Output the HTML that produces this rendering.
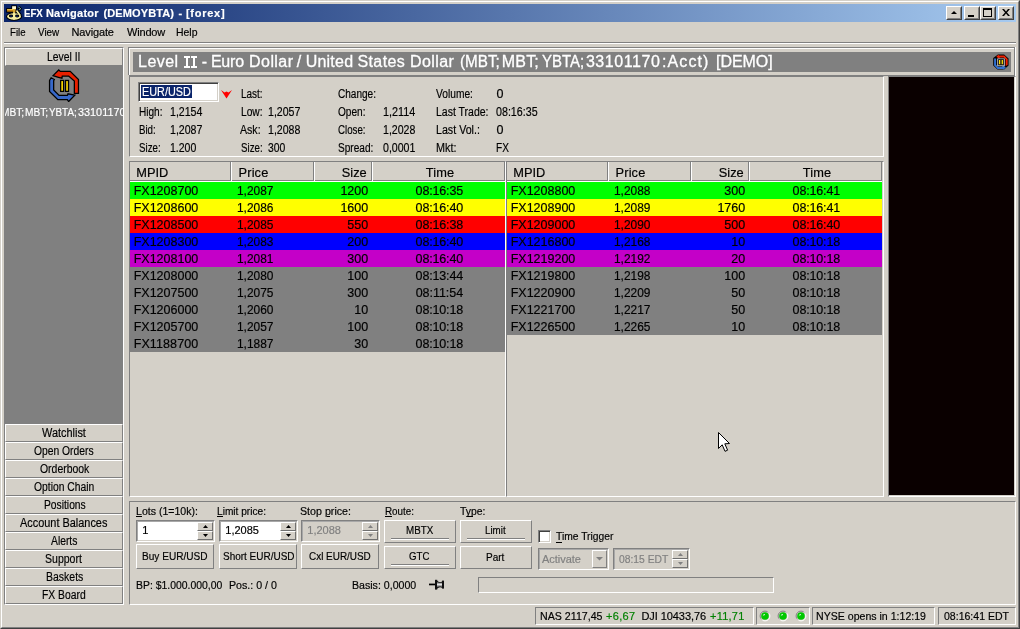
<!DOCTYPE html>
<html><head><meta charset="utf-8">
<style>
*{box-sizing:border-box;margin:0;padding:0}
html,body{width:1020px;height:629px;overflow:hidden;background:#d4d0c8}
body{font-family:"Liberation Sans",sans-serif;font-size:11px;color:#000;position:relative}
.abs{position:absolute}
.t{position:absolute;white-space:pre;-webkit-text-stroke:0.18px currentColor}
</style></head><body><div id="w" style="position:absolute;left:0;top:0;width:1020px;height:629px;will-change:transform">
<div class="abs " style="left:0px;top:0px;width:1020px;height:629px;border:1px solid;border-color:#d4d0c8 #404040 #404040 #d4d0c8"></div>
<div class="abs " style="left:1px;top:1px;width:1018px;height:627px;border:1px solid;border-color:#fff #808080 #808080 #fff"></div>
<div class="abs " style="left:4px;top:4px;width:1012px;height:18px;background:linear-gradient(90deg,#0a246a 0%,#a6caf0 100%)"></div>
<div class="t" style="left:23.60px;top:5.19px;font-size:11px;line-height:16px;color:#fff;transform:scaleX(0.8787);transform-origin:0 0;font-weight:bold;">EFX</div>
<div class="t" style="left:45.90px;top:5.19px;font-size:11px;line-height:16px;color:#fff;letter-spacing:0.240px;font-weight:bold;">Navigator</div>
<div class="t" style="left:103.50px;top:5.19px;font-size:11px;line-height:16px;color:#fff;letter-spacing:0.114px;font-weight:bold;">(DEMOYBTA)</div>
<div class="t" style="left:178.40px;top:5.19px;font-size:11px;line-height:16px;color:#fff;font-weight:bold;">-</div>
<div class="t" style="left:185.90px;top:5.19px;font-size:11px;line-height:16px;color:#fff;letter-spacing:0.753px;font-weight:bold;">[forex]</div>
<svg class="abs" style="left:2px;top:2px" width="26" height="22" viewBox="0 0 743 629">
<defs><linearGradient id="gd" x1="0" y1="0" x2="0" y2="1"><stop offset="0" stop-color="#f8d860"/><stop offset="0.5" stop-color="#c88818"/><stop offset="1" stop-color="#a06808"/></linearGradient></defs>
<ellipse cx="345" cy="415" rx="228" ry="122" fill="#000"/>
<path d="M420 240 L525 385" stroke="#000" stroke-width="95" fill="none"/>
<rect x="120" y="175" width="290" height="130" fill="#000"/>
<rect x="265" y="95" width="160" height="120" fill="#000"/>
<path d="M440 170 L500 110 L575 190 L515 270 Z" fill="#000"/>
<ellipse cx="345" cy="415" rx="198" ry="95" fill="#f4eca0"/>
<path d="M415 245 L520 385" stroke="#f4eca0" stroke-width="46" fill="none"/>
<ellipse cx="258" cy="400" rx="62" ry="42" fill="#000"/><ellipse cx="432" cy="400" rx="62" ry="42" fill="#000"/>
<ellipse cx="262" cy="405" rx="36" ry="20" fill="#0a246a"/><ellipse cx="428" cy="405" rx="36" ry="20" fill="#0a246a"/>
<rect x="315" y="290" width="60" height="215" fill="#f4eca0"/>
<rect x="145" y="200" width="240" height="80" fill="url(#gd)"/>
<rect x="290" y="120" width="110" height="85" fill="#fff8d0"/>
<rect x="315" y="200" width="62" height="100" fill="#d8a830"/>
<path d="M465 150 l20 -20 l25 25 l-20 20 z M500 190 l20 -20 l25 25 l-20 20 z M480 215 l15 -15 l20 20 l-15 15 z" fill="#90d0d8"/>
</svg>
<div class="abs" style="left:946px;top:6px;width:16px;height:14px;background:#d4d0c8;border:1px solid;border-color:#fff #404040 #404040 #fff"><div style="position:absolute;left:0;top:0;right:0;bottom:0;border:1px solid;border-color:#d4d0c8 #808080 #808080 #d4d0c8"></div><svg style="position:absolute;left:4px;top:4px" width="6" height="3"><path d="M0 3 L3 0 L6 3 Z" fill="#000"/></svg></div>
<div class="abs" style="left:964px;top:6px;width:16px;height:14px;background:#d4d0c8;border:1px solid;border-color:#fff #404040 #404040 #fff"><div style="position:absolute;left:0;top:0;right:0;bottom:0;border:1px solid;border-color:#d4d0c8 #808080 #808080 #d4d0c8"></div><div style="position:absolute;left:3px;top:8px;width:6px;height:2px;background:#000"></div></div>
<div class="abs" style="left:980px;top:6px;width:16px;height:14px;background:#d4d0c8;border:1px solid;border-color:#fff #404040 #404040 #fff"><div style="position:absolute;left:0;top:0;right:0;bottom:0;border:1px solid;border-color:#d4d0c8 #808080 #808080 #d4d0c8"></div><div style="position:absolute;left:2px;top:1px;width:9px;height:9px;border:1px solid #000;border-top-width:2px"></div></div>
<div class="abs" style="left:998px;top:6px;width:16px;height:14px;background:#d4d0c8;border:1px solid;border-color:#fff #404040 #404040 #fff"><div style="position:absolute;left:0;top:0;right:0;bottom:0;border:1px solid;border-color:#d4d0c8 #808080 #808080 #d4d0c8"></div><svg style="position:absolute;left:3px;top:2px" width="8" height="7"><path d="M0 0h2l2 2.5 2-2.5h2l-3 3.5 3 3.5h-2l-2-2.5-2 2.5h-2l3-3.5z" fill="#000"/></svg></div>
<div class="t" style="left:9.50px;top:23.69px;font-size:11px;line-height:16px;color:#000;transform:scaleX(0.8744);transform-origin:0 0;">File</div>
<div class="t" style="left:37.80px;top:23.69px;font-size:11px;line-height:16px;color:#000;transform:scaleX(0.8966);transform-origin:0 0;">View</div>
<div class="t" style="left:71.50px;top:23.69px;font-size:11px;line-height:16px;color:#000;letter-spacing:-0.139px;">Navigate</div>
<div class="t" style="left:127.00px;top:23.69px;font-size:11px;line-height:16px;color:#000;letter-spacing:-0.187px;">Window</div>
<div class="t" style="left:176.00px;top:23.69px;font-size:11px;line-height:16px;color:#000;transform:scaleX(0.9503);transform-origin:0 0;">Help</div>
<div class="abs " style="left:4px;top:42px;width:1012px;height:1px;background:#808080;"></div>
<div class="abs " style="left:4px;top:43px;width:1012px;height:1px;background:#fff;"></div>
<div class="abs " style="left:4px;top:47px;width:120px;height:558px;border:1px solid;border-color:#808080 #fff #fff #808080"></div>
<div class="abs " style="left:5px;top:48px;width:118px;height:556px;background:#808080;"></div>
<div class="abs " style="left:5px;top:48px;width:118px;height:18px;background:#d4d0c8;border:1px solid;border-color:#fff #808080 #808080 #fff"></div>
<div class="t" style="left:46.60px;top:48.67px;font-size:12.5px;line-height:16px;color:#000;transform:scaleX(0.8312);transform-origin:0 0;">Level II</div>
<div class="abs" style="left:5px;top:100px;width:118px;height:24px;overflow:hidden">
<div class="t" style="left:-3.90px;top:4.19px;font-size:11px;line-height:16px;color:#fff;transform:scaleX(0.9219);transform-origin:0 0;">MBT;</div>
<div class="t" style="left:20.20px;top:4.19px;font-size:11px;line-height:16px;color:#fff;transform:scaleX(0.9219);transform-origin:0 0;">MBT;</div>
<div class="t" style="left:44.30px;top:4.19px;font-size:11px;line-height:16px;color:#fff;transform:scaleX(0.8944);transform-origin:0 0;">YBTA;</div>
<div class="t" style="left:73.10px;top:4.19px;font-size:11px;line-height:16px;color:#fff;transform:scaleX(0.9870);transform-origin:0 0;">33101170</div>
</div>
<svg class="abs" style="left:40px;top:62px" width="50" height="40" viewBox="0 0 786 629">
<path d="M205 215 L295 125 L320 148 L475 148 L605 275 L605 495 L540 495 L540 300 L450 222 L350 222 L345 255 L290 240 Z" fill="#e82000" stroke="#000" stroke-width="20" stroke-linejoin="miter"/>
<path d="M175 248 L225 275 L215 295 L215 440 L300 525 L430 525 L440 500 L548 520 L450 622 L430 592 L280 592 L150 462 L150 290 Z" fill="#3868c8" stroke="#000" stroke-width="20"/>
<rect x="325" y="290" width="46" height="172" fill="#ffd800" stroke="#000" stroke-width="20"/>
<rect x="402" y="290" width="46" height="172" fill="#ffd800" stroke="#000" stroke-width="20"/>
</svg>
<div class="abs " style="left:5px;top:424px;width:118px;height:18px;background:#d4d0c8;border:1px solid;border-color:#fff #808080 #808080 #fff"></div>
<div class="t" style="left:42.30px;top:424.67px;font-size:12.5px;line-height:16px;color:#000;transform:scaleX(0.8738);transform-origin:0 0;">Watchlist</div>
<div class="abs " style="left:5px;top:442px;width:118px;height:18px;background:#d4d0c8;border:1px solid;border-color:#fff #808080 #808080 #fff"></div>
<div class="t" style="left:34.40px;top:442.67px;font-size:12.5px;line-height:16px;color:#000;transform:scaleX(0.8249);transform-origin:0 0;">Open Orders</div>
<div class="abs " style="left:5px;top:460px;width:118px;height:18px;background:#d4d0c8;border:1px solid;border-color:#fff #808080 #808080 #fff"></div>
<div class="t" style="left:39.60px;top:460.67px;font-size:12.5px;line-height:16px;color:#000;transform:scaleX(0.8348);transform-origin:0 0;">Orderbook</div>
<div class="abs " style="left:5px;top:478px;width:118px;height:18px;background:#d4d0c8;border:1px solid;border-color:#fff #808080 #808080 #fff"></div>
<div class="t" style="left:33.70px;top:478.67px;font-size:12.5px;line-height:16px;color:#000;transform:scaleX(0.8264);transform-origin:0 0;">Option Chain</div>
<div class="abs " style="left:5px;top:496px;width:118px;height:18px;background:#d4d0c8;border:1px solid;border-color:#fff #808080 #808080 #fff"></div>
<div class="t" style="left:43.50px;top:496.67px;font-size:12.5px;line-height:16px;color:#000;transform:scaleX(0.8221);transform-origin:0 0;">Positions</div>
<div class="abs " style="left:5px;top:514px;width:118px;height:18px;background:#d4d0c8;border:1px solid;border-color:#fff #808080 #808080 #fff"></div>
<div class="t" style="left:19.80px;top:514.67px;font-size:12.5px;line-height:16px;color:#000;transform:scaleX(0.8734);transform-origin:0 0;">Account Balances</div>
<div class="abs " style="left:5px;top:532px;width:118px;height:18px;background:#d4d0c8;border:1px solid;border-color:#fff #808080 #808080 #fff"></div>
<div class="t" style="left:50.80px;top:532.67px;font-size:12.5px;line-height:16px;color:#000;transform:scaleX(0.8262);transform-origin:0 0;">Alerts</div>
<div class="abs " style="left:5px;top:550px;width:118px;height:18px;background:#d4d0c8;border:1px solid;border-color:#fff #808080 #808080 #fff"></div>
<div class="t" style="left:45.40px;top:550.67px;font-size:12.5px;line-height:16px;color:#000;transform:scaleX(0.8428);transform-origin:0 0;">Support</div>
<div class="abs " style="left:5px;top:568px;width:118px;height:18px;background:#d4d0c8;border:1px solid;border-color:#fff #808080 #808080 #fff"></div>
<div class="t" style="left:45.70px;top:568.67px;font-size:12.5px;line-height:16px;color:#000;transform:scaleX(0.8389);transform-origin:0 0;">Baskets</div>
<div class="abs " style="left:5px;top:586px;width:118px;height:18px;background:#d4d0c8;border:1px solid;border-color:#fff #808080 #808080 #fff"></div>
<div class="t" style="left:42.30px;top:586.67px;font-size:12.5px;line-height:16px;color:#000;transform:scaleX(0.8276);transform-origin:0 0;">FX Board</div>
<div class="abs " style="left:128px;top:47px;width:888px;height:1px;background:#808080;"></div>
<div class="abs " style="left:128px;top:47px;width:1px;height:28px;background:#808080;"></div>
<div class="abs " style="left:129px;top:48px;width:886px;height:1px;background:#fff;"></div>
<div class="abs " style="left:129px;top:48px;width:1px;height:27px;background:#fff;"></div>
<div class="abs " style="left:1014px;top:48px;width:1px;height:28px;background:#808080;"></div>
<div class="abs " style="left:1015px;top:47px;width:1px;height:29px;background:#fff;"></div>
<div class="abs " style="left:129px;top:75px;width:886px;height:1px;background:#808080;"></div>
<div class="abs " style="left:133px;top:52px;width:878px;height:20px;background:#808080;"></div>
<div class="t" style="left:138.10px;top:54.26px;font-size:16px;line-height:16px;color:#fff;letter-spacing:0.430px;-webkit-text-stroke:0.3px #fff;">Level</div>
<div class="abs " style="left:186.2px;top:56.4px;width:1.7px;height:11.4px;background:#fff;"></div>
<div class="abs " style="left:184.1px;top:56.4px;width:5.8px;height:1.4px;background:#fff;"></div>
<div class="abs " style="left:184.1px;top:66.4px;width:5.8px;height:1.4px;background:#fff;"></div>
<div class="abs " style="left:193.2px;top:56.4px;width:1.7px;height:11.4px;background:#fff;"></div>
<div class="abs " style="left:191.1px;top:56.4px;width:5.8px;height:1.4px;background:#fff;"></div>
<div class="abs " style="left:191.1px;top:66.4px;width:5.8px;height:1.4px;background:#fff;"></div>
<div class="t" style="left:201.80px;top:54.26px;font-size:16px;line-height:16px;color:#fff;-webkit-text-stroke:0.3px #fff;">-</div>
<div class="t" style="left:210.90px;top:54.26px;font-size:16px;line-height:16px;color:#fff;letter-spacing:-0.200px;-webkit-text-stroke:0.3px #fff;">Euro</div>
<div class="t" style="left:249.10px;top:54.26px;font-size:16px;line-height:16px;color:#fff;letter-spacing:0.418px;-webkit-text-stroke:0.3px #fff;">Dollar</div>
<div class="t" style="left:296.70px;top:54.26px;font-size:16px;line-height:16px;color:#fff;-webkit-text-stroke:0.3px #fff;">/</div>
<div class="t" style="left:305.70px;top:54.26px;font-size:16px;line-height:16px;color:#fff;letter-spacing:0.225px;-webkit-text-stroke:0.3px #fff;">United</div>
<div class="t" style="left:357.50px;top:54.26px;font-size:16px;line-height:16px;color:#fff;letter-spacing:0.373px;-webkit-text-stroke:0.3px #fff;">States</div>
<div class="t" style="left:409.90px;top:54.26px;font-size:16px;line-height:16px;color:#fff;letter-spacing:0.435px;-webkit-text-stroke:0.3px #fff;">Dollar</div>
<div class="t" style="left:460.40px;top:54.26px;font-size:16px;line-height:16px;color:#fff;transform:scaleX(0.9527);transform-origin:0 0;-webkit-text-stroke:0.3px #fff;">(MBT;</div>
<div class="t" style="left:501.80px;top:54.26px;font-size:16px;line-height:16px;color:#fff;letter-spacing:0.188px;-webkit-text-stroke:0.3px #fff;">MBT;</div>
<div class="t" style="left:541.60px;top:54.26px;font-size:16px;line-height:16px;color:#fff;transform:scaleX(0.9345);transform-origin:0 0;-webkit-text-stroke:0.3px #fff;">YBTA;</div>
<div class="t" style="left:585.90px;top:54.26px;font-size:16px;line-height:16px;color:#fff;letter-spacing:0.562px;-webkit-text-stroke:0.3px #fff;">33101170</div>
<div class="t" style="left:662.00px;top:54.26px;font-size:16px;line-height:16px;color:#fff;letter-spacing:1.101px;-webkit-text-stroke:0.3px #fff;">:Acct)</div>
<div class="t" style="left:716.00px;top:54.26px;font-size:16px;line-height:16px;color:#fff;letter-spacing:-0.032px;-webkit-text-stroke:0.3px #fff;">[DEMO]</div>
<svg class="abs" style="left:993px;top:54px" width="16" height="16" viewBox="0 0 360 360">
<polygon points="110,10 250,10 350,100 350,260 250,350 100,350 5,260 5,90" fill="#000"/>
<path d="M75 60 L120 15 L135 35 L255 35 L330 110 L330 250 L285 270 L285 120 L240 80 L150 80 L145 110 Z" fill="#f02000"/>
<path d="M25 100 L70 100 L70 240 L110 285 L210 285 L215 255 L290 300 L240 355 L225 335 L100 335 L25 260 Z" fill="#3070d0"/>
<rect x="95" y="100" width="170" height="175" fill="#c8c8c8"/>
<rect x="115" y="115" width="130" height="140" fill="#181818"/>
<rect x="135" y="135" width="28" height="95" fill="#ffe000"/>
<rect x="195" y="135" width="28" height="95" fill="#ffe000"/>
</svg>
<div class="abs " style="left:129px;top:76px;width:755px;height:81px;border:1px solid;border-color:#808080 #fff #fff #808080"></div>
<div class="abs " style="left:138px;top:82px;width:81px;height:20px;background:#fff;border:1px solid;border-color:#808080 #fff #fff #808080;box-shadow:inset 1px 1px 0 #404040, inset -1px -1px 0 #d4d0c8"></div>
<div class="abs " style="left:141px;top:85px;width:51px;height:13px;background:#0a246a;"></div>
<div class="t" style="left:142.00px;top:83.67px;font-size:12.5px;line-height:16px;color:#fff;transform:scaleX(0.8674);transform-origin:0 0;">EUR/USD</div>
<svg class="abs" style="left:221px;top:89px" width="11" height="10"><path d="M0 1 L3.5 3.5 L5.5 2.5 L7.5 3.5 L11 1 L5.5 9.5 Z" fill="#f00"/></svg>
<div class="t" style="left:138.70px;top:103.67px;font-size:12.5px;line-height:16px;color:#000;transform:scaleX(0.8053);transform-origin:0 0;">High:</div>
<div class="t" style="left:169.70px;top:103.67px;font-size:12.5px;line-height:16px;color:#000;transform:scaleX(0.8474);transform-origin:0 0;">1,2154</div>
<div class="t" style="left:138.70px;top:121.67px;font-size:12.5px;line-height:16px;color:#000;transform:scaleX(0.7753);transform-origin:0 0;">Bid:</div>
<div class="t" style="left:169.70px;top:121.67px;font-size:12.5px;line-height:16px;color:#000;transform:scaleX(0.8474);transform-origin:0 0;">1,2087</div>
<div class="t" style="left:138.70px;top:139.67px;font-size:12.5px;line-height:16px;color:#000;transform:scaleX(0.7773);transform-origin:0 0;">Size:</div>
<div class="t" style="left:169.70px;top:139.67px;font-size:12.5px;line-height:16px;color:#000;transform:scaleX(0.8408);transform-origin:0 0;">1.200</div>
<div class="t" style="left:240.70px;top:85.67px;font-size:12.5px;line-height:16px;color:#000;transform:scaleX(0.7971);transform-origin:0 0;">Last:</div>
<div class="t" style="left:240.70px;top:103.67px;font-size:12.5px;line-height:16px;color:#000;transform:scaleX(0.8180);transform-origin:0 0;">Low:</div>
<div class="t" style="left:267.50px;top:103.67px;font-size:12.5px;line-height:16px;color:#000;transform:scaleX(0.8474);transform-origin:0 0;">1,2057</div>
<div class="t" style="left:239.90px;top:121.67px;font-size:12.5px;line-height:16px;color:#000;transform:scaleX(0.8474);transform-origin:0 0;">Ask:</div>
<div class="t" style="left:267.50px;top:121.67px;font-size:12.5px;line-height:16px;color:#000;transform:scaleX(0.8474);transform-origin:0 0;">1,2088</div>
<div class="t" style="left:240.70px;top:139.67px;font-size:12.5px;line-height:16px;color:#000;transform:scaleX(0.7773);transform-origin:0 0;">Size:</div>
<div class="t" style="left:267.50px;top:139.67px;font-size:12.5px;line-height:16px;color:#000;transform:scaleX(0.8295);transform-origin:0 0;">300</div>
<div class="t" style="left:337.90px;top:85.67px;font-size:12.5px;line-height:16px;color:#000;transform:scaleX(0.8041);transform-origin:0 0;">Change:</div>
<div class="t" style="left:337.90px;top:103.67px;font-size:12.5px;line-height:16px;color:#000;transform:scaleX(0.8076);transform-origin:0 0;">Open:</div>
<div class="t" style="left:382.70px;top:103.67px;font-size:12.5px;line-height:16px;color:#000;transform:scaleX(0.8685);transform-origin:0 0;">1,2114</div>
<div class="t" style="left:337.90px;top:121.67px;font-size:12.5px;line-height:16px;color:#000;transform:scaleX(0.7761);transform-origin:0 0;">Close:</div>
<div class="t" style="left:382.70px;top:121.67px;font-size:12.5px;line-height:16px;color:#000;transform:scaleX(0.8474);transform-origin:0 0;">1,2028</div>
<div class="t" style="left:337.90px;top:139.67px;font-size:12.5px;line-height:16px;color:#000;transform:scaleX(0.8063);transform-origin:0 0;">Spread:</div>
<div class="t" style="left:382.70px;top:139.67px;font-size:12.5px;line-height:16px;color:#000;transform:scaleX(0.8474);transform-origin:0 0;">0,0001</div>
<div class="t" style="left:436.00px;top:85.67px;font-size:12.5px;line-height:16px;color:#000;transform:scaleX(0.8170);transform-origin:0 0;">Volume:</div>
<div class="t" style="left:496.40px;top:85.67px;font-size:12.5px;line-height:16px;color:#000;">0</div>
<div class="t" style="left:436.00px;top:103.67px;font-size:12.5px;line-height:16px;color:#000;transform:scaleX(0.8395);transform-origin:0 0;">Last Trade:</div>
<div class="t" style="left:496.40px;top:103.67px;font-size:12.5px;line-height:16px;color:#000;transform:scaleX(0.8549);transform-origin:0 0;">08:16:35</div>
<div class="t" style="left:436.00px;top:121.67px;font-size:12.5px;line-height:16px;color:#000;transform:scaleX(0.8537);transform-origin:0 0;">Last Vol.:</div>
<div class="t" style="left:496.40px;top:121.67px;font-size:12.5px;line-height:16px;color:#000;">0</div>
<div class="t" style="left:436.00px;top:139.67px;font-size:12.5px;line-height:16px;color:#000;transform:scaleX(0.8641);transform-origin:0 0;">Mkt:</div>
<div class="t" style="left:496.40px;top:139.67px;font-size:12.5px;line-height:16px;color:#000;transform:scaleX(0.8076);transform-origin:0 0;">FX</div>
<div class="abs " style="left:129px;top:161px;width:377px;height:336px;border:1px solid;border-color:#808080 #fff #fff #808080"></div>
<div class="abs " style="left:506px;top:161px;width:378px;height:336px;border:1px solid;border-color:#808080 #fff #fff #808080"></div>
<div class="abs " style="left:130px;top:180px;width:375px;height:1px;background:#808080;"></div>
<div class="abs " style="left:130px;top:181px;width:375px;height:1px;background:#fff;"></div>
<div class="abs " style="left:230px;top:162px;width:1px;height:19px;background:#808080;"></div>
<div class="abs " style="left:231px;top:162px;width:1px;height:19px;background:#fff;"></div>
<div class="abs " style="left:313px;top:162px;width:1px;height:19px;background:#808080;"></div>
<div class="abs " style="left:314px;top:162px;width:1px;height:19px;background:#fff;"></div>
<div class="abs " style="left:371px;top:162px;width:1px;height:19px;background:#808080;"></div>
<div class="abs " style="left:372px;top:162px;width:1px;height:19px;background:#fff;"></div>
<div class="abs " style="left:504px;top:162px;width:1px;height:19px;background:#808080;"></div>
<div class="t" style="left:136.30px;top:164.56px;font-size:12.8px;line-height:16px;color:#000;letter-spacing:-0.050px;">MPID</div>
<div class="t" style="left:238.60px;top:164.56px;font-size:12.8px;line-height:16px;color:#000;letter-spacing:0.127px;">Price</div>
<div class="t" style="left:341.80px;top:164.56px;font-size:12.8px;line-height:16px;color:#000;">Size</div>
<div class="t" style="left:425.68px;top:164.56px;font-size:12.8px;line-height:16px;color:#000;letter-spacing:0.158px;">Time</div>
<div class="abs " style="left:130px;top:182px;width:375px;height:17px;background:#00ff00;"></div>
<div class="t" style="left:133.70px;top:182.67px;font-size:12.5px;line-height:16px;color:#000;letter-spacing:-0.004px;">FX1208700</div>
<div class="t" style="left:236.60px;top:182.67px;font-size:12.5px;line-height:16px;color:#000;transform:scaleX(0.9520);transform-origin:0 0;">1,2087</div>
<div class="t" style="left:340.39px;top:182.67px;font-size:12.5px;line-height:16px;color:#000;">1200</div>
<div class="t" style="left:415.62px;top:182.67px;font-size:12.5px;line-height:16px;color:#000;letter-spacing:-0.157px;">08:16:35</div>
<div class="abs " style="left:130px;top:199px;width:375px;height:17px;background:#ffff00;"></div>
<div class="t" style="left:133.70px;top:199.67px;font-size:12.5px;line-height:16px;color:#000;letter-spacing:-0.004px;">FX1208600</div>
<div class="t" style="left:236.60px;top:199.67px;font-size:12.5px;line-height:16px;color:#000;transform:scaleX(0.9520);transform-origin:0 0;">1,2086</div>
<div class="t" style="left:340.39px;top:199.67px;font-size:12.5px;line-height:16px;color:#000;">1600</div>
<div class="t" style="left:415.62px;top:199.67px;font-size:12.5px;line-height:16px;color:#000;letter-spacing:-0.157px;">08:16:40</div>
<div class="abs " style="left:130px;top:216px;width:375px;height:17px;background:#ff0000;"></div>
<div class="t" style="left:133.70px;top:216.67px;font-size:12.5px;line-height:16px;color:#000;letter-spacing:-0.004px;">FX1208500</div>
<div class="t" style="left:236.60px;top:216.67px;font-size:12.5px;line-height:16px;color:#000;transform:scaleX(0.9520);transform-origin:0 0;">1,2085</div>
<div class="t" style="left:347.34px;top:216.67px;font-size:12.5px;line-height:16px;color:#000;">550</div>
<div class="t" style="left:415.62px;top:216.67px;font-size:12.5px;line-height:16px;color:#000;letter-spacing:-0.157px;">08:16:38</div>
<div class="abs " style="left:130px;top:233px;width:375px;height:17px;background:#0000ff;"></div>
<div class="t" style="left:133.70px;top:233.67px;font-size:12.5px;line-height:16px;color:#000;letter-spacing:-0.004px;">FX1208300</div>
<div class="t" style="left:236.60px;top:233.67px;font-size:12.5px;line-height:16px;color:#000;transform:scaleX(0.9520);transform-origin:0 0;">1,2083</div>
<div class="t" style="left:347.34px;top:233.67px;font-size:12.5px;line-height:16px;color:#000;">200</div>
<div class="t" style="left:415.62px;top:233.67px;font-size:12.5px;line-height:16px;color:#000;letter-spacing:-0.157px;">08:16:40</div>
<div class="abs " style="left:130px;top:250px;width:375px;height:17px;background:#c400c8;"></div>
<div class="t" style="left:133.70px;top:250.67px;font-size:12.5px;line-height:16px;color:#000;letter-spacing:-0.004px;">FX1208100</div>
<div class="t" style="left:236.60px;top:250.67px;font-size:12.5px;line-height:16px;color:#000;transform:scaleX(0.9520);transform-origin:0 0;">1,2081</div>
<div class="t" style="left:347.34px;top:250.67px;font-size:12.5px;line-height:16px;color:#000;">300</div>
<div class="t" style="left:415.62px;top:250.67px;font-size:12.5px;line-height:16px;color:#000;letter-spacing:-0.157px;">08:16:40</div>
<div class="abs " style="left:130px;top:267px;width:375px;height:17px;background:#808080;"></div>
<div class="t" style="left:133.70px;top:267.67px;font-size:12.5px;line-height:16px;color:#000;letter-spacing:-0.004px;">FX1208000</div>
<div class="t" style="left:236.60px;top:267.67px;font-size:12.5px;line-height:16px;color:#000;transform:scaleX(0.9520);transform-origin:0 0;">1,2080</div>
<div class="t" style="left:347.34px;top:267.67px;font-size:12.5px;line-height:16px;color:#000;">100</div>
<div class="t" style="left:415.62px;top:267.67px;font-size:12.5px;line-height:16px;color:#000;letter-spacing:-0.157px;">08:13:44</div>
<div class="abs " style="left:130px;top:284px;width:375px;height:17px;background:#808080;"></div>
<div class="t" style="left:133.70px;top:284.67px;font-size:12.5px;line-height:16px;color:#000;letter-spacing:-0.004px;">FX1207500</div>
<div class="t" style="left:236.60px;top:284.67px;font-size:12.5px;line-height:16px;color:#000;transform:scaleX(0.9520);transform-origin:0 0;">1,2075</div>
<div class="t" style="left:347.34px;top:284.67px;font-size:12.5px;line-height:16px;color:#000;">300</div>
<div class="t" style="left:415.68px;top:284.67px;font-size:12.5px;line-height:16px;color:#000;letter-spacing:-0.041px;">08:11:54</div>
<div class="abs " style="left:130px;top:301px;width:375px;height:17px;background:#808080;"></div>
<div class="t" style="left:133.70px;top:301.67px;font-size:12.5px;line-height:16px;color:#000;letter-spacing:-0.004px;">FX1206000</div>
<div class="t" style="left:236.60px;top:301.67px;font-size:12.5px;line-height:16px;color:#000;transform:scaleX(0.9520);transform-origin:0 0;">1,2060</div>
<div class="t" style="left:354.30px;top:301.67px;font-size:12.5px;line-height:16px;color:#000;">10</div>
<div class="t" style="left:415.62px;top:301.67px;font-size:12.5px;line-height:16px;color:#000;letter-spacing:-0.157px;">08:10:18</div>
<div class="abs " style="left:130px;top:318px;width:375px;height:17px;background:#808080;"></div>
<div class="t" style="left:133.70px;top:318.67px;font-size:12.5px;line-height:16px;color:#000;letter-spacing:-0.004px;">FX1205700</div>
<div class="t" style="left:236.60px;top:318.67px;font-size:12.5px;line-height:16px;color:#000;transform:scaleX(0.9520);transform-origin:0 0;">1,2057</div>
<div class="t" style="left:347.34px;top:318.67px;font-size:12.5px;line-height:16px;color:#000;">100</div>
<div class="t" style="left:415.62px;top:318.67px;font-size:12.5px;line-height:16px;color:#000;letter-spacing:-0.157px;">08:10:18</div>
<div class="abs " style="left:130px;top:335px;width:375px;height:17px;background:#808080;"></div>
<div class="t" style="left:133.70px;top:335.67px;font-size:12.5px;line-height:16px;color:#000;letter-spacing:0.099px;">FX1188700</div>
<div class="t" style="left:236.60px;top:335.67px;font-size:12.5px;line-height:16px;color:#000;transform:scaleX(0.9520);transform-origin:0 0;">1,1887</div>
<div class="t" style="left:354.30px;top:335.67px;font-size:12.5px;line-height:16px;color:#000;">30</div>
<div class="t" style="left:415.62px;top:335.67px;font-size:12.5px;line-height:16px;color:#000;letter-spacing:-0.157px;">08:10:18</div>
<div class="abs " style="left:507px;top:180px;width:375px;height:1px;background:#808080;"></div>
<div class="abs " style="left:507px;top:181px;width:375px;height:1px;background:#fff;"></div>
<div class="abs " style="left:607px;top:162px;width:1px;height:19px;background:#808080;"></div>
<div class="abs " style="left:608px;top:162px;width:1px;height:19px;background:#fff;"></div>
<div class="abs " style="left:690px;top:162px;width:1px;height:19px;background:#808080;"></div>
<div class="abs " style="left:691px;top:162px;width:1px;height:19px;background:#fff;"></div>
<div class="abs " style="left:748px;top:162px;width:1px;height:19px;background:#808080;"></div>
<div class="abs " style="left:749px;top:162px;width:1px;height:19px;background:#fff;"></div>
<div class="abs " style="left:881px;top:162px;width:1px;height:19px;background:#808080;"></div>
<div class="t" style="left:513.30px;top:164.56px;font-size:12.8px;line-height:16px;color:#000;letter-spacing:-0.050px;">MPID</div>
<div class="t" style="left:615.60px;top:164.56px;font-size:12.8px;line-height:16px;color:#000;letter-spacing:0.127px;">Price</div>
<div class="t" style="left:718.80px;top:164.56px;font-size:12.8px;line-height:16px;color:#000;">Size</div>
<div class="t" style="left:802.68px;top:164.56px;font-size:12.8px;line-height:16px;color:#000;letter-spacing:0.158px;">Time</div>
<div class="abs " style="left:507px;top:182px;width:375px;height:17px;background:#00ff00;"></div>
<div class="t" style="left:510.70px;top:182.67px;font-size:12.5px;line-height:16px;color:#000;letter-spacing:-0.004px;">FX1208800</div>
<div class="t" style="left:613.60px;top:182.67px;font-size:12.5px;line-height:16px;color:#000;transform:scaleX(0.9520);transform-origin:0 0;">1,2088</div>
<div class="t" style="left:724.34px;top:182.67px;font-size:12.5px;line-height:16px;color:#000;">300</div>
<div class="t" style="left:792.62px;top:182.67px;font-size:12.5px;line-height:16px;color:#000;letter-spacing:-0.157px;">08:16:41</div>
<div class="abs " style="left:507px;top:199px;width:375px;height:17px;background:#ffff00;"></div>
<div class="t" style="left:510.70px;top:199.67px;font-size:12.5px;line-height:16px;color:#000;letter-spacing:-0.004px;">FX1208900</div>
<div class="t" style="left:613.60px;top:199.67px;font-size:12.5px;line-height:16px;color:#000;transform:scaleX(0.9520);transform-origin:0 0;">1,2089</div>
<div class="t" style="left:717.39px;top:199.67px;font-size:12.5px;line-height:16px;color:#000;">1760</div>
<div class="t" style="left:792.62px;top:199.67px;font-size:12.5px;line-height:16px;color:#000;letter-spacing:-0.157px;">08:16:41</div>
<div class="abs " style="left:507px;top:216px;width:375px;height:17px;background:#ff0000;"></div>
<div class="t" style="left:510.70px;top:216.67px;font-size:12.5px;line-height:16px;color:#000;letter-spacing:-0.004px;">FX1209000</div>
<div class="t" style="left:613.60px;top:216.67px;font-size:12.5px;line-height:16px;color:#000;transform:scaleX(0.9520);transform-origin:0 0;">1,2090</div>
<div class="t" style="left:724.34px;top:216.67px;font-size:12.5px;line-height:16px;color:#000;">500</div>
<div class="t" style="left:792.62px;top:216.67px;font-size:12.5px;line-height:16px;color:#000;letter-spacing:-0.157px;">08:16:40</div>
<div class="abs " style="left:507px;top:233px;width:375px;height:17px;background:#0000ff;"></div>
<div class="t" style="left:510.70px;top:233.67px;font-size:12.5px;line-height:16px;color:#000;letter-spacing:-0.004px;">FX1216800</div>
<div class="t" style="left:613.60px;top:233.67px;font-size:12.5px;line-height:16px;color:#000;transform:scaleX(0.9520);transform-origin:0 0;">1,2168</div>
<div class="t" style="left:731.30px;top:233.67px;font-size:12.5px;line-height:16px;color:#000;">10</div>
<div class="t" style="left:792.62px;top:233.67px;font-size:12.5px;line-height:16px;color:#000;letter-spacing:-0.157px;">08:10:18</div>
<div class="abs " style="left:507px;top:250px;width:375px;height:17px;background:#c400c8;"></div>
<div class="t" style="left:510.70px;top:250.67px;font-size:12.5px;line-height:16px;color:#000;letter-spacing:-0.004px;">FX1219200</div>
<div class="t" style="left:613.60px;top:250.67px;font-size:12.5px;line-height:16px;color:#000;transform:scaleX(0.9520);transform-origin:0 0;">1,2192</div>
<div class="t" style="left:731.30px;top:250.67px;font-size:12.5px;line-height:16px;color:#000;">20</div>
<div class="t" style="left:792.62px;top:250.67px;font-size:12.5px;line-height:16px;color:#000;letter-spacing:-0.157px;">08:10:18</div>
<div class="abs " style="left:507px;top:267px;width:375px;height:17px;background:#808080;"></div>
<div class="t" style="left:510.70px;top:267.67px;font-size:12.5px;line-height:16px;color:#000;letter-spacing:-0.004px;">FX1219800</div>
<div class="t" style="left:613.60px;top:267.67px;font-size:12.5px;line-height:16px;color:#000;transform:scaleX(0.9520);transform-origin:0 0;">1,2198</div>
<div class="t" style="left:724.34px;top:267.67px;font-size:12.5px;line-height:16px;color:#000;">100</div>
<div class="t" style="left:792.62px;top:267.67px;font-size:12.5px;line-height:16px;color:#000;letter-spacing:-0.157px;">08:10:18</div>
<div class="abs " style="left:507px;top:284px;width:375px;height:17px;background:#808080;"></div>
<div class="t" style="left:510.70px;top:284.67px;font-size:12.5px;line-height:16px;color:#000;letter-spacing:-0.004px;">FX1220900</div>
<div class="t" style="left:613.60px;top:284.67px;font-size:12.5px;line-height:16px;color:#000;transform:scaleX(0.9520);transform-origin:0 0;">1,2209</div>
<div class="t" style="left:731.30px;top:284.67px;font-size:12.5px;line-height:16px;color:#000;">50</div>
<div class="t" style="left:792.62px;top:284.67px;font-size:12.5px;line-height:16px;color:#000;letter-spacing:-0.157px;">08:10:18</div>
<div class="abs " style="left:507px;top:301px;width:375px;height:17px;background:#808080;"></div>
<div class="t" style="left:510.70px;top:301.67px;font-size:12.5px;line-height:16px;color:#000;letter-spacing:-0.004px;">FX1221700</div>
<div class="t" style="left:613.60px;top:301.67px;font-size:12.5px;line-height:16px;color:#000;transform:scaleX(0.9520);transform-origin:0 0;">1,2217</div>
<div class="t" style="left:731.30px;top:301.67px;font-size:12.5px;line-height:16px;color:#000;">50</div>
<div class="t" style="left:792.62px;top:301.67px;font-size:12.5px;line-height:16px;color:#000;letter-spacing:-0.157px;">08:10:18</div>
<div class="abs " style="left:507px;top:318px;width:375px;height:17px;background:#808080;"></div>
<div class="t" style="left:510.70px;top:318.67px;font-size:12.5px;line-height:16px;color:#000;letter-spacing:-0.004px;">FX1226500</div>
<div class="t" style="left:613.60px;top:318.67px;font-size:12.5px;line-height:16px;color:#000;transform:scaleX(0.9520);transform-origin:0 0;">1,2265</div>
<div class="t" style="left:731.30px;top:318.67px;font-size:12.5px;line-height:16px;color:#000;">10</div>
<div class="t" style="left:792.62px;top:318.67px;font-size:12.5px;line-height:16px;color:#000;letter-spacing:-0.157px;">08:10:18</div>
<div class="abs " style="left:888px;top:76px;width:128px;height:421px;border:1px solid;border-color:#808080 #fff #fff #808080"></div>
<div class="abs " style="left:889px;top:77px;width:125px;height:418px;background:#0a0000;"></div>
<div class="abs " style="left:129px;top:501px;width:887px;height:104px;border:1px solid;border-color:#808080 #fff #fff #808080"></div>
<div class="t" style="left:135.80px;top:503.19px;font-size:11px;line-height:16px;color:#000;transform:scaleX(0.9611);transform-origin:0 0;">Lots (1=10k):</div>
<div class="abs " style="left:136px;top:516px;width:6px;height:1px;background:#000;"></div>
<div class="t" style="left:217.30px;top:503.19px;font-size:11px;line-height:16px;color:#000;transform:scaleX(0.9214);transform-origin:0 0;">Limit price:</div>
<div class="abs " style="left:217px;top:516px;width:6px;height:1px;background:#000;"></div>
<div class="t" style="left:299.60px;top:503.19px;font-size:11px;line-height:16px;color:#000;transform:scaleX(0.9699);transform-origin:0 0;">Stop price:</div>
<div class="abs " style="left:327px;top:516px;width:3px;height:1px;background:#000;"></div>
<div class="t" style="left:385.00px;top:503.19px;font-size:11px;line-height:16px;color:#000;transform:scaleX(0.8948);transform-origin:0 0;">Route:</div>
<div class="abs " style="left:385px;top:516px;width:7px;height:1px;background:#000;"></div>
<div class="t" style="left:460.00px;top:503.19px;font-size:11px;line-height:16px;color:#000;transform:scaleX(0.9441);transform-origin:0 0;">Type:</div>
<div class="abs " style="left:467px;top:516px;width:6px;height:1px;background:#000;"></div>
<div class="abs " style="left:136px;top:520px;width:79px;height:22px;background:#fff;border:1px solid;border-color:#808080 #fff #fff #808080;box-shadow:inset 1px 1px 0 #a8a8a8, inset -1px -1px 0 #d4d0c8"></div>
<div class="t" style="left:142.30px;top:521.69px;font-size:11px;line-height:16px;color:#000;">1</div>
<div class="abs " style="left:197px;top:522px;width:16px;height:9px;background:#d4d0c8;border:1px solid;border-color:#fff #707070 #707070 #fff"></div>
<svg class="abs" style="left:203px;top:525px" width="5" height="3"><path d="M0 3 L2.5 0 L5 3 Z" fill="#000"/></svg>
<div class="abs " style="left:197px;top:531px;width:16px;height:9px;background:#d4d0c8;border:1px solid;border-color:#fff #707070 #707070 #fff"></div>
<svg class="abs" style="left:203px;top:534px" width="5" height="3"><path d="M0 0 L2.5 3 L5 0 Z" fill="#000"/></svg>
<div class="abs " style="left:219px;top:520px;width:79px;height:22px;background:#fff;border:1px solid;border-color:#808080 #fff #fff #808080;box-shadow:inset 1px 1px 0 #a8a8a8, inset -1px -1px 0 #d4d0c8"></div>
<div class="t" style="left:225.30px;top:521.69px;font-size:11px;line-height:16px;color:#000;">1,2085</div>
<div class="abs " style="left:280px;top:522px;width:16px;height:9px;background:#d4d0c8;border:1px solid;border-color:#fff #707070 #707070 #fff"></div>
<svg class="abs" style="left:286px;top:525px" width="5" height="3"><path d="M0 3 L2.5 0 L5 3 Z" fill="#000"/></svg>
<div class="abs " style="left:280px;top:531px;width:16px;height:9px;background:#d4d0c8;border:1px solid;border-color:#fff #707070 #707070 #fff"></div>
<svg class="abs" style="left:286px;top:534px" width="5" height="3"><path d="M0 0 L2.5 3 L5 0 Z" fill="#000"/></svg>
<div class="abs " style="left:301px;top:520px;width:79px;height:22px;background:#d4d0c8;border:1px solid;border-color:#808080 #fff #fff #808080;box-shadow:inset 1px 1px 0 #a8a8a8, inset -1px -1px 0 #d4d0c8"></div>
<div class="t" style="left:307.30px;top:521.69px;font-size:11px;line-height:16px;color:#808080;">1,2088</div>
<div class="abs " style="left:362px;top:522px;width:16px;height:9px;background:#d4d0c8;border:1px solid;border-color:#fff #707070 #707070 #fff"></div>
<svg class="abs" style="left:368px;top:525px" width="5" height="3"><path d="M0 3 L2.5 0 L5 3 Z" fill="#808080"/></svg>
<div class="abs " style="left:362px;top:531px;width:16px;height:9px;background:#d4d0c8;border:1px solid;border-color:#fff #707070 #707070 #fff"></div>
<svg class="abs" style="left:368px;top:534px" width="5" height="3"><path d="M0 0 L2.5 3 L5 0 Z" fill="#808080"/></svg>
<div class="abs " style="left:136px;top:544px;width:78px;height:25px;background:#d4d0c8;border:1px solid;border-color:#fff #808080 #808080 #fff"></div>
<div class="t" style="left:141.70px;top:547.69px;font-size:11px;line-height:16px;color:#000;transform:scaleX(0.9159);transform-origin:0 0;">Buy EUR/USD</div>
<div class="abs " style="left:219px;top:544px;width:78px;height:25px;background:#d4d0c8;border:1px solid;border-color:#fff #808080 #808080 #fff"></div>
<div class="t" style="left:222.50px;top:547.69px;font-size:11px;line-height:16px;color:#000;transform:scaleX(0.9067);transform-origin:0 0;">Short EUR/USD</div>
<div class="abs " style="left:301px;top:544px;width:78px;height:25px;background:#d4d0c8;border:1px solid;border-color:#fff #808080 #808080 #fff"></div>
<div class="t" style="left:308.60px;top:547.69px;font-size:11px;line-height:16px;color:#000;transform:scaleX(0.9028);transform-origin:0 0;">Cxl EUR/USD</div>
<div class="abs " style="left:384px;top:520px;width:72px;height:23px;background:#d4d0c8;border:1px solid;border-color:#fff #808080 #808080 #fff"></div>
<div class="t" style="left:405.70px;top:521.89px;font-size:11px;line-height:16px;color:#000;transform:scaleX(0.8901);transform-origin:0 0;">MBTX</div>
<div class="abs " style="left:391px;top:538px;width:58px;height:1px;background:#808080;"></div>
<div class="abs " style="left:391px;top:539px;width:58px;height:1px;background:#fff;"></div>
<div class="abs " style="left:384px;top:546px;width:72px;height:23px;background:#d4d0c8;border:1px solid;border-color:#fff #808080 #808080 #fff"></div>
<div class="t" style="left:408.80px;top:547.69px;font-size:11px;line-height:16px;color:#000;transform:scaleX(0.8786);transform-origin:0 0;">GTC</div>
<div class="abs " style="left:391px;top:564px;width:58px;height:1px;background:#808080;"></div>
<div class="abs " style="left:391px;top:565px;width:58px;height:1px;background:#fff;"></div>
<div class="abs " style="left:460px;top:520px;width:72px;height:23px;background:#d4d0c8;border:1px solid;border-color:#fff #808080 #808080 #fff"></div>
<div class="t" style="left:484.60px;top:522.09px;font-size:11px;line-height:16px;color:#000;transform:scaleX(0.8870);transform-origin:0 0;">Limit</div>
<div class="abs " style="left:467px;top:538px;width:58px;height:1px;background:#808080;"></div>
<div class="abs " style="left:467px;top:539px;width:58px;height:1px;background:#fff;"></div>
<div class="abs " style="left:460px;top:546px;width:72px;height:23px;background:#d4d0c8;border:1px solid;border-color:#fff #808080 #808080 #fff"></div>
<div class="t" style="left:485.80px;top:548.79px;font-size:11px;line-height:16px;color:#000;transform:scaleX(0.9120);transform-origin:0 0;">Part</div>
<div class="abs " style="left:538px;top:530px;width:13px;height:13px;background:#fff;border:1px solid;border-color:#808080 #fff #fff #808080;box-shadow:inset 1px 1px 0 #404040, inset -1px -1px 0 #d4d0c8"></div>
<div class="t" style="left:556.30px;top:528.19px;font-size:11px;line-height:16px;color:#000;transform:scaleX(0.9359);transform-origin:0 0;">Time Trigger</div>
<div class="abs " style="left:556px;top:542px;width:6px;height:1px;background:#000;"></div>
<div class="abs " style="left:538px;top:548px;width:71px;height:22px;background:#d4d0c8;border:1px solid;border-color:#808080 #fff #fff #808080;box-shadow:inset 1px 1px 0 #a8a8a8, inset -1px -1px 0 #d4d0c8"></div>
<div class="t" style="left:542.00px;top:550.69px;font-size:11px;line-height:16px;color:#808080;letter-spacing:-0.041px;">Activate</div>
<div class="abs " style="left:592px;top:550px;width:15px;height:18px;background:#d4d0c8;border:1px solid;border-color:#fff #808080 #808080 #fff"></div>
<svg class="abs" style="left:596px;top:557px" width="7" height="4"><path d="M0 0 L3.5 3.5 L7 0 Z" fill="#808080"/></svg>
<div class="abs " style="left:613px;top:548px;width:77px;height:22px;background:#d4d0c8;border:1px solid;border-color:#808080 #fff #fff #808080;box-shadow:inset 1px 1px 0 #a8a8a8, inset -1px -1px 0 #d4d0c8"></div>
<div class="t" style="left:618.70px;top:550.69px;font-size:11px;line-height:16px;color:#808080;transform:scaleX(0.9375);transform-origin:0 0;">08:15 EDT</div>
<div class="abs " style="left:672px;top:550px;width:16px;height:9px;background:#d4d0c8;border:1px solid;border-color:#fff #707070 #707070 #fff"></div>
<svg class="abs" style="left:678px;top:553px" width="5" height="3"><path d="M0 3 L2.5 0 L5 3 Z" fill="#808080"/></svg>
<div class="abs " style="left:672px;top:559px;width:16px;height:9px;background:#d4d0c8;border:1px solid;border-color:#fff #707070 #707070 #fff"></div>
<svg class="abs" style="left:678px;top:562px" width="5" height="3"><path d="M0 0 L2.5 3 L5 0 Z" fill="#808080"/></svg>
<div class="t" style="left:135.80px;top:576.89px;font-size:11px;line-height:16px;color:#000;transform:scaleX(0.9459);transform-origin:0 0;">BP: $1.000.000,00</div>
<div class="t" style="left:228.50px;top:576.89px;font-size:11px;line-height:16px;color:#000;transform:scaleX(0.9672);transform-origin:0 0;">Pos.: 0 / 0</div>
<div class="t" style="left:351.80px;top:576.89px;font-size:11px;line-height:16px;color:#000;transform:scaleX(0.9631);transform-origin:0 0;">Basis: 0,0000</div>
<svg class="abs" style="left:428px;top:579px" width="18" height="12" viewBox="0 0 18 12">
<defs><linearGradient id="pg" x1="0" y1="0" x2="0" y2="1"><stop offset="0" stop-color="#404040"/><stop offset="0.45" stop-color="#e8e8e8"/><stop offset="1" stop-color="#303030"/></linearGradient></defs>
<rect x="1" y="4.6" width="7" height="1.7" fill="#000"/>
<rect x="7" y="0.8" width="2.2" height="9.8" fill="#101010"/>
<path d="M9 1.6 Q11.5 4.2 14.2 2.4 L14.2 9 Q11.5 7.2 9 9.8 Z" fill="#101010"/><path d="M9 2.8 Q11.5 4.6 14.2 3.4 L14.2 8 Q11.5 6.8 9 8.6 Z" fill="url(#pg)"/>
<rect x="14" y="1.6" width="2" height="8" fill="#101010"/>
</svg>
<div class="abs " style="left:478px;top:577px;width:296px;height:16px;border:1px solid;border-color:#808080 #fff #fff #808080"></div>
<svg class="abs" style="left:717px;top:431px" width="14" height="22" viewBox="-1 -1 14 22"><path d="M0.5 0.5 L0.5 16.5 L4.2 12.8 L7 19.3 L9.6 18.2 L6.8 11.8 L11.5 11.5 Z" fill="#fff" stroke="#000" stroke-width="1" stroke-linejoin="miter"/></svg>
<div class="abs " style="left:535px;top:607px;width:219px;height:18px;border:1px solid;border-color:#808080 #fff #fff #808080"></div>
<div class="abs " style="left:756px;top:607px;width:54px;height:18px;border:1px solid;border-color:#808080 #fff #fff #808080"></div>
<div class="abs " style="left:812px;top:607px;width:123px;height:18px;border:1px solid;border-color:#808080 #fff #fff #808080"></div>
<div class="abs " style="left:938px;top:607px;width:78px;height:18px;border:1px solid;border-color:#808080 #fff #fff #808080"></div>
<div class="t" style="left:539.80px;top:608.19px;font-size:11px;line-height:16px;color:#000;transform:scaleX(0.9672);transform-origin:0 0;">NAS 2117,45</div>
<div class="t" style="left:606.00px;top:608.19px;font-size:11px;line-height:16px;color:#008000;letter-spacing:0.313px;">+6,67</div>
<div class="t" style="left:641.50px;top:608.19px;font-size:11px;line-height:16px;color:#000;letter-spacing:-0.078px;">DJI 10433,76</div>
<div class="t" style="left:710.00px;top:608.19px;font-size:11px;line-height:16px;color:#008000;letter-spacing:0.228px;">+11,71</div>
<div class="t" style="left:816.00px;top:608.19px;font-size:11px;line-height:16px;color:#000;transform:scaleX(0.9619);transform-origin:0 0;">NYSE opens in 1:12:19</div>
<div class="t" style="left:943.60px;top:608.19px;font-size:11px;line-height:16px;color:#000;transform:scaleX(0.9576);transform-origin:0 0;">08:16:41 EDT</div>
<svg width="0" height="0" style="position:absolute"><defs><linearGradient id="lr" x1="0" y1="0" x2="1" y2="1"><stop offset="0.35" stop-color="#808080"/><stop offset="0.65" stop-color="#ffffff"/></linearGradient></defs></svg>
<svg class="abs" style="left:758.6px;top:609.5px" width="12" height="12" viewBox="0 0 12 12"><circle cx="6" cy="6" r="4.9" fill="#d4d0c8" stroke="url(#lr)" stroke-width="1"/><circle cx="6" cy="6" r="3.8" fill="#00c800"/><path d="M3.9 5.6 Q4.6 4.5 6 4.6" stroke="#fff" stroke-width="0.9" fill="none"/></svg>
<svg class="abs" style="left:776.5px;top:609.5px" width="12" height="12" viewBox="0 0 12 12"><circle cx="6" cy="6" r="4.9" fill="#d4d0c8" stroke="url(#lr)" stroke-width="1"/><circle cx="6" cy="6" r="3.8" fill="#00c800"/><path d="M3.9 5.6 Q4.6 4.5 6 4.6" stroke="#fff" stroke-width="0.9" fill="none"/></svg>
<svg class="abs" style="left:794.5px;top:609.5px" width="12" height="12" viewBox="0 0 12 12"><circle cx="6" cy="6" r="4.9" fill="#d4d0c8" stroke="url(#lr)" stroke-width="1"/><circle cx="6" cy="6" r="3.8" fill="#00c800"/><path d="M3.9 5.6 Q4.6 4.5 6 4.6" stroke="#fff" stroke-width="0.9" fill="none"/></svg>
</div></body></html>
